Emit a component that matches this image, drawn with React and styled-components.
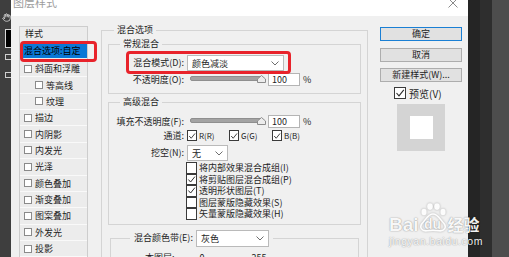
import React from 'react';
import styled, { createGlobalStyle } from 'styled-components';
import { Hand } from 'lucide-react';

const GlobalStyle = createGlobalStyle`
  html, body {
    margin: 0;
    padding: 0;
  }
  body {
    width: 509px;
    height: 257px;
    overflow: hidden;
    background: #3c3c3c;
    font-family: "Noto Sans CJK SC", "Noto Sans", sans-serif;
    font-size: 9px;
    color: #1e1e1e;
  }
`;

const Screen = styled.div`
  position: relative;
  display: flex;
  width: 509px;
  height: 257px;
  overflow: hidden;
`;

/* ---------- photoshop tool strip on the left ---------- */
const ToolStrip = styled.div`
  width: 11px;
  flex: none;
  background: #3e3e3e;
  display: flex;
  flex-direction: column;
  align-items: flex-end;
  padding-top: 13px;
  box-sizing: border-box;
  color: #e6e6e6;
`;

const Swatch = styled.div`
  width: 6px;
  height: 19px;
  margin-top: 7px;
  background: #000;
  border: 1px solid #d8d8d8;
  border-right: none;
  box-sizing: border-box;
`;

const ToolGlyph = styled.div`
  width: 6px;
  height: 6px;
  margin-top: ${(p) => p.$mt}px;
  border: 1px solid #cfcfcf;
  border-right: none;
  box-sizing: border-box;
`;

/* ---------- dialog ---------- */
const Dialog = styled.div`
  position: relative;
  width: 457px;
  flex: none;
  background: #f0f0f0;
  display: flex;
  flex-direction: column;
`;

const TitleBar = styled.div`
  height: 16px;
  flex: none;
  background: #fff;
  display: flex;
  align-items: flex-start;
  justify-content: space-between;
  padding: 0 10px 0 2px;
`;

const Title = styled.span`
  font-size: 11px;
  line-height: 12px;
  margin-top: -4px;
  color: #9c9c9c;
`;

const CloseGlyph = styled.svg`
  margin-top: -2px;
`;

const Body = styled.div`
  flex: 1;
  display: flex;
  align-items: flex-start;
`;

/* ---------- styles list ---------- */
const StylePanel = styled.div`
  align-self: stretch;
  width: 69px;
  margin: 10px 0 0 8px;
  box-sizing: border-box;
  border: 1px solid #cdcdcd;
  border-bottom: none;
  background: #ececec;
`;

const PanelHeader = styled.div`
  height: 16px;
  line-height: 13px;
  padding-left: 5px;
`;

const ActiveItem = styled.div`
  height: 15px;
  line-height: 15px;
  margin: 0 0 3px 2px;
  padding-left: 2px;
  background: #0a78d6;
  color: #000;
  white-space: nowrap;
`;

const StyleItem = styled.div`
  height: 16.36px;
  box-sizing: border-box;
  border-bottom: 1px solid #f9f9f9;
  display: flex;
  align-items: center;
  gap: 3px;
  padding-left: ${(p) => (p.$indent ? 15 : 4)}px;
  white-space: nowrap;
`;

const SmallBox = styled.span`
  width: 8px;
  height: 8px;
  box-sizing: border-box;
  border: 1px solid #8a8a8a;
  background: #fff;
  flex: none;
`;

/* ---------- group boxes ---------- */
const Group = styled.fieldset`
  margin: ${(p) => p.$margin || '0'};
  padding: ${(p) => p.$padding || '0'};
  border: 1px solid #d4d4d4;
  min-width: 0;
  box-sizing: border-box;
  ${(p) => p.$width && `width: ${p.$width}px;`}
  ${(p) => p.$stretch && 'align-self: stretch;'}
`;

const Legend = styled.legend`
  margin-left: ${(p) => p.$offset}px;
  padding: 0 3px;
  font-size: 9px;
  line-height: 12px;
  color: #1e1e1e;
`;

const ControlLegend = styled.legend`
  margin-left: 19px;
  padding: 0 4px;
  display: flex;
  align-items: center;
  gap: 3px;
`;

const FormRow = styled.div`
  display: grid;
  grid-template-columns: 75px auto;
  column-gap: 3px;
  align-items: center;
  height: ${(p) => p.$h}px;
  margin-top: ${(p) => p.$mt || 0}px;
`;

const Label = styled.span`
  text-align: right;
  white-space: nowrap;
  line-height: 12px;
`;

const Select = styled.div`
  width: ${(p) => p.$w}px;
  height: ${(p) => p.$h || 16}px;
  box-sizing: border-box;
  border: 1px solid #bababa;
  background: #fff;
  display: flex;
  align-items: center;
  justify-content: space-between;
  padding: 0 4px 0 ${(p) => p.$pl || 4}px;
  font-size: 9px;
`;

const SliderField = styled.div`
  display: flex;
  align-items: center;
`;

const Slider = styled.div`
  position: relative;
  width: 80px;
  height: 13px;
  padding: 0 5px 0 3px;
  box-sizing: border-box;
  display: flex;
  align-items: center;
`;

const Track = styled.div`
  flex: 1;
  height: 3px;
  margin-top: -3px;
  border-radius: 2px;
  background: #a3a3a3;
  border: 1px solid #8f8f8f;
`;

const Thumb = styled.svg`
  position: absolute;
  right: 1px;
  top: 2px;
`;

const NumberInput = styled.div`
  width: 32px;
  height: 13px;
  margin-left: 1px;
  box-sizing: border-box;
  border: 1px solid #b4b4b4;
  background: #fff;
  padding-left: 3px;
  line-height: 11px;
`;

const Percent = styled.span`
  margin-left: 3px;
`;

const Channels = styled.div`
  display: flex;
  align-items: center;
`;

const Channel = styled.label`
  width: ${(p) => p.$w}px;
  display: flex;
  align-items: center;
  gap: 2px;
  font-size: 8px;
`;

const OptionList = styled.div`
  margin: 1px 0 0 77px;
  display: flex;
  flex-direction: column;
`;

const Option = styled.div`
  height: 11.5px;
  display: flex;
  align-items: center;
  gap: 2px;
  white-space: nowrap;
`;

const BoxFrame = styled.span`
  width: ${(p) => p.$w}px;
  height: ${(p) => p.$h}px;
  box-sizing: border-box;
  border: 1px solid #3a3a3a;
  background: #fff;
  flex: none;
  display: flex;
  align-items: center;
  justify-content: center;
`;

const BandRow = styled.div`
  display: flex;
  padding: 5px 0 0 34px;
  line-height: 12px;
`;

const BandValue = styled.span`
  margin-left: ${(p) => p.$ml}px;
`;

/* ---------- buttons column ---------- */
const ButtonColumn = styled.div`
  width: 82px;
  margin: 11px 0 0 12px;
  display: flex;
  flex-direction: column;
  gap: 6.5px;
`;

const Button = styled.div`
  height: 14px;
  box-sizing: border-box;
  border: 1px solid ${(p) => (p.$primary ? '#1a7fd4' : '#adadad')};
  background: #e1e1e1;
  text-align: center;
  line-height: 12px;
  font-size: 9px;
`;

const PreviewToggle = styled.div`
  display: flex;
  align-items: center;
  gap: 3px;
  height: 12px;
  margin-top: -1.5px;
  padding-left: 14px;
  font-size: 10px;
`;

const PreviewSwatch = styled.div`
  width: 48px;
  height: 47px;
  margin: -1.5px 0 0 17px;
  background: #d4d4d4;
  display: flex;
  align-items: center;
  justify-content: center;
`;

const PreviewInner = styled.div`
  width: 23px;
  height: 23px;
  background: #fff;
`;

const SideDark = styled.div`
  flex: 1;
  background: linear-gradient(to right, #252525 0 12px, #2e2e2e 12px 24px, #4d4d4d 24px);
`;

/* ---------- red annotations ---------- */
const Highlight = styled.div`
  position: absolute;
  left: ${(p) => p.$x}px;
  top: ${(p) => p.$y}px;
  width: ${(p) => p.$w}px;
  height: ${(p) => p.$h}px;
  box-sizing: border-box;
  border: 3px solid #e8232b;
  border-radius: 4px;
  pointer-events: none;
`;

/* ---------- baidu watermark ---------- */
const Watermark = styled.div`
  position: absolute;
  left: 389px;
  top: 203px;
  color: rgba(255, 255, 255, 0.95);
  text-shadow: 0 0 1px rgba(0, 0, 0, 0.35), 0 0 2px rgba(0, 0, 0, 0.2);
  font-family: "Liberation Sans", Arial, sans-serif;
`;

const MarkLine = styled.div`
  display: flex;
  align-items: flex-end;
`;

const Bai = styled.span`
  font-size: 19px;
  font-weight: bold;
  line-height: 15px;
`;

const Paw = styled.span`
  position: relative;
  width: 28px;
  height: 29px;
  display: flex;
  align-items: flex-end;
  justify-content: center;
  font-size: 14px;
  font-weight: bold;
  line-height: 15px;
`;

const PawDrawing = styled.svg`
  position: absolute;
  left: 0;
  top: 0;
  filter: drop-shadow(0 0 1px rgba(0, 0, 0, 0.3));
`;

const Jingyan = styled.span`
  font-family: "Noto Sans CJK SC", sans-serif;
  font-size: 16px;
  font-weight: bold;
  line-height: 16px;
  margin-left: 1px;
`;

const Domain = styled.div`
  font-size: 10.5px;
  letter-spacing: 0.55px;
  line-height: 12px;
  margin-top: 3px;
`;

const Chevron = () => (
  <svg width="8" height="5" viewBox="0 0 8 5">
    <polyline points="0.5,0.5 4,4 7.5,0.5" fill="none" stroke="#6e6e6e" strokeWidth="1" />
  </svg>
);

const Tick = ({ size }) => (
  <svg width={size} height={size} viewBox="0 0 10 10">
    <polyline points="1.5,5 4,7.8 8.8,1.8" fill="none" stroke="#2b2b2b" strokeWidth="1.1" />
  </svg>
);

const CheckBox = ({ w = 10, h = 11, checked }) => (
  <BoxFrame $w={w} $h={h}>{checked && <Tick size={w - 2} />}</BoxFrame>
);

const SliderControl = ({ value }) => (
  <SliderField>
    <Slider>
      <Track />
      <Thumb width="9" height="8" viewBox="0 0 9 8">
        <path d="M4.5 0.5 L8.5 4 L8.5 7.5 L0.5 7.5 L0.5 4 Z" fill="#ececec" stroke="#8c8c8c" />
      </Thumb>
    </Slider>
    <NumberInput>{value}</NumberInput>
    <Percent>%</Percent>
  </SliderField>
);

const styleItems = [
  { name: '斜面和浮雕' },
  { name: '等高线', indent: true },
  { name: '纹理', indent: true },
  { name: '描边' },
  { name: '内阴影' },
  { name: '内发光' },
  { name: '光泽' },
  { name: '颜色叠加' },
  { name: '渐变叠加' },
  { name: '图案叠加' },
  { name: '外发光' },
  { name: '投影' },
];

const advancedOptions = [
  { text: '将内部效果混合成组(I)', checked: false },
  { text: '将剪贴图层混合成组(P)', checked: true },
  { text: '透明形状图层(T)', checked: true },
  { text: '图层蒙版隐藏效果(S)', checked: false },
  { text: '矢量蒙版隐藏效果(H)', checked: false },
];

export default function App() {
  return (
    <>
      <GlobalStyle />
      <Screen>
        <ToolStrip>
          <Hand size={9} strokeWidth={2} />
          <Swatch />
          <ToolGlyph $mt={6} />
          <ToolGlyph $mt={12} />
        </ToolStrip>

        <Dialog>
          <TitleBar>
            <Title>图层样式</Title>
            <CloseGlyph width="10" height="10" viewBox="0 0 10 10">
              <path d="M0.5 0.5 L9.5 9.5 M9.5 0.5 L0.5 9.5" stroke="#8a8a8a" strokeWidth="1" />
            </CloseGlyph>
          </TitleBar>

          <Body>
            <StylePanel>
              <PanelHeader>样式</PanelHeader>
              <ActiveItem>混合选项:自定</ActiveItem>
              {styleItems.map((item) => (
                <StyleItem key={item.name} $indent={item.indent}>
                  <SmallBox />
                  {item.name}
                </StyleItem>
              ))}
            </StylePanel>

            <Group $width={267} $margin="8px 0 0 13px" $padding="0 6px" $stretch>
              <Legend $offset={6}>混合选项</Legend>

              <Group $margin="2px 0 0 0" $padding="5px 0 7px 0">
                <Legend $offset={11}>常规混合</Legend>
                <FormRow $h={16}>
                  <Label>混合模式(D):</Label>
                  <Select $w={97}>
                    颜色减淡
                    <Chevron />
                  </Select>
                </FormRow>
                <FormRow $h={13} $mt={2}>
                  <Label>不透明度(O):</Label>
                  <SliderControl value="100" />
                </FormRow>
              </Group>

              <Group $margin="2px 0 0 0" $padding="7px 0 4px 0">
                <Legend $offset={11}>高级混合</Legend>
                <FormRow $h={13}>
                  <Label>填充不透明度(F):</Label>
                  <SliderControl value="100" />
                </FormRow>
                <FormRow $h={13} $mt={1}>
                  <Label>通道:</Label>
                  <Channels>
                    <Channel $w={42}>
                      <CheckBox checked />
                      R(R)
                    </Channel>
                    <Channel $w={43}>
                      <CheckBox checked />
                      G(G)
                    </Channel>
                    <Channel $w={40}>
                      <CheckBox checked />
                      B(B)
                    </Channel>
                  </Channels>
                </FormRow>
                <FormRow $h={16} $mt={3}>
                  <Label>挖空(N):</Label>
                  <Select $w={41}>
                    无
                    <Chevron />
                  </Select>
                </FormRow>
                <OptionList>
                  {advancedOptions.map((opt) => (
                    <Option key={opt.text}>
                      <CheckBox w={11} h={11.5} checked={opt.checked} />
                      {opt.text}
                    </Option>
                  ))}
                </OptionList>
              </Group>

              <Group $margin="5px 2px 0 2px" $padding="0">
                <ControlLegend>
                  <Label>混合颜色带(E):</Label>
                  <Select $w={73} $h={17}>
                    灰色
                    <Chevron />
                  </Select>
                </ControlLegend>
                <BandRow>
                  本图层:
                  <BandValue $ml={25}>0</BandValue>
                  <BandValue $ml={47}>255</BandValue>
                </BandRow>
              </Group>
            </Group>

            <ButtonColumn>
              <Button $primary>确定</Button>
              <Button>取消</Button>
              <Button>新建样式(W)...</Button>
              <PreviewToggle>
                <CheckBox w={12} h={12} checked />
                预览(V)
              </PreviewToggle>
              <PreviewSwatch>
                <PreviewInner />
              </PreviewSwatch>
            </ButtonColumn>
          </Body>

          <Highlight $x={9} $y={41} $w={77} $h={21} />
          <Highlight $x={115} $y={51} $w={165} $h={23} />
        </Dialog>

        <SideDark />

        <Watermark>
          <MarkLine>
            <Bai>Bai</Bai>
            <Paw>
              <PawDrawing width="28" height="29" viewBox="0 0 28 29">
                <ellipse cx="5" cy="9" rx="2.6" ry="3.2" fill="rgba(255,255,255,0.95)" />
                <ellipse cx="11" cy="3.6" rx="2.8" ry="3.3" fill="rgba(255,255,255,0.95)" />
                <ellipse cx="18" cy="3.6" rx="2.8" ry="3.3" fill="rgba(255,255,255,0.95)" />
                <ellipse cx="24" cy="9" rx="2.6" ry="3.2" fill="rgba(255,255,255,0.95)" />
                <path
                  d="M14 11 C9 11 7 16.5 3 20.5 C0 24.5 3 28.5 8 27.8 C11 27.3 17 27.3 20 27.8 C25 28.5 28 24.5 25 20.5 C21 16.5 19 11 14 11 Z"
                  fill="none"
                  stroke="rgba(255,255,255,0.95)"
                  strokeWidth="1.6"
                />
              </PawDrawing>
              du
            </Paw>
            <Jingyan>经验</Jingyan>
          </MarkLine>
          <Domain>jingyan.baidu.com</Domain>
        </Watermark>
      </Screen>
    </>
  );
}
